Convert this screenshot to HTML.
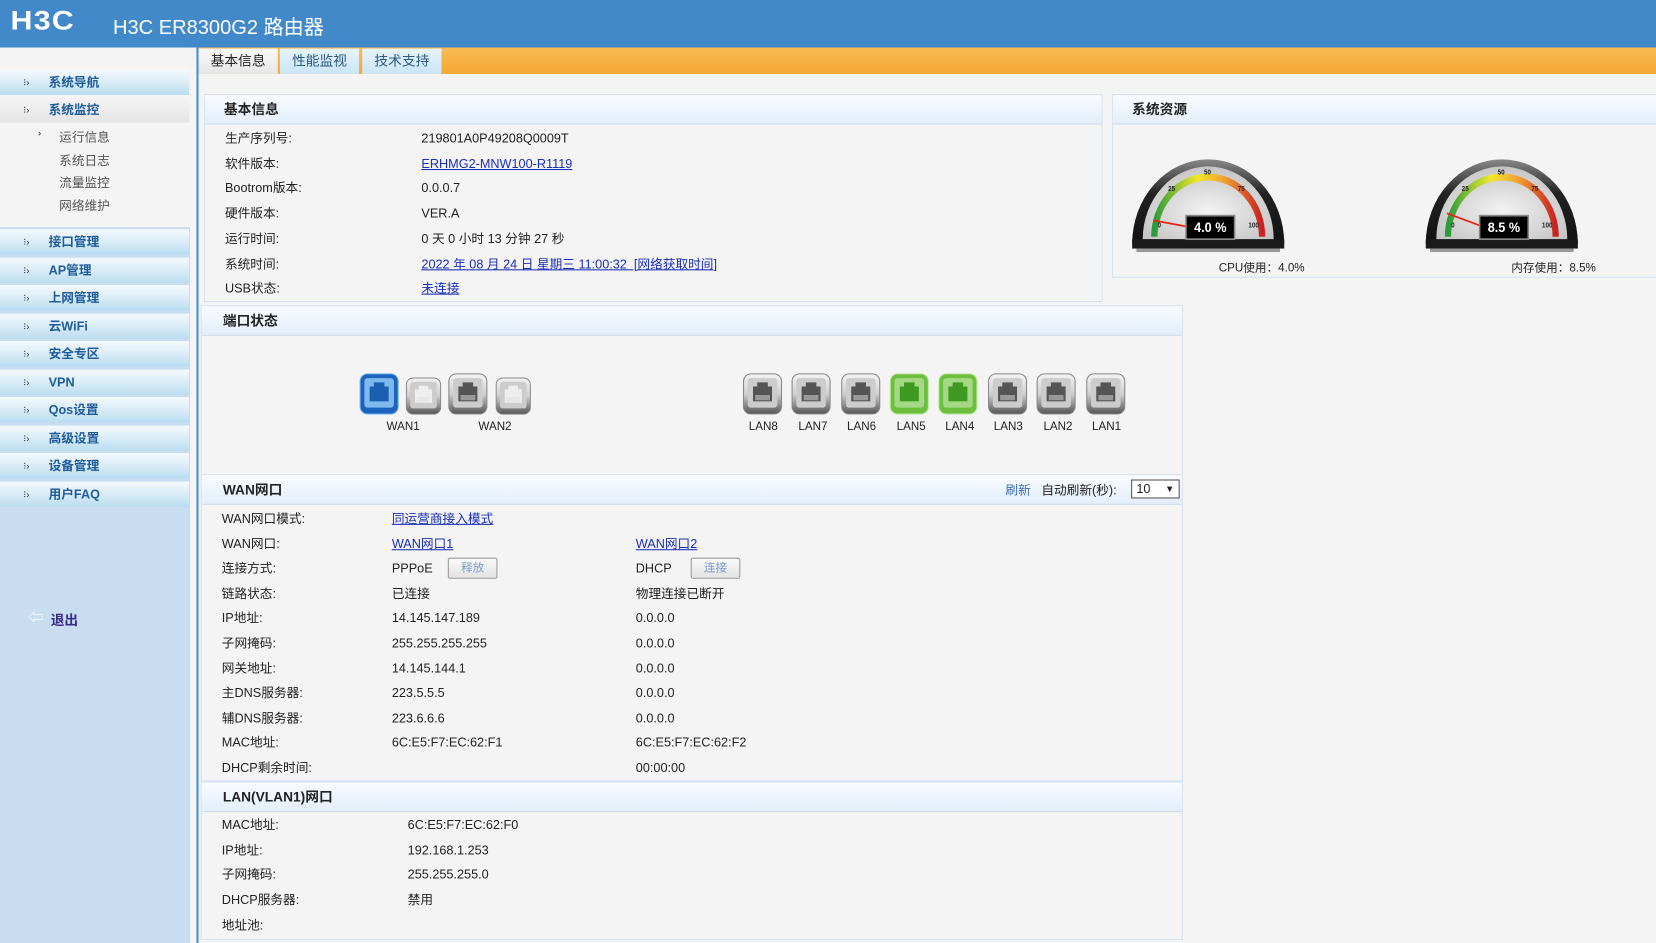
<!DOCTYPE html>
<html><head><meta charset="utf-8">
<style>
html,body{margin:0;padding:0;width:1656px;height:943px;overflow:hidden;background:#f4f4f4}
#w{position:absolute;left:0;top:0;width:1568px;height:893px;transform:scale(1.05612);transform-origin:0 0;font-family:"Liberation Sans","Noto Sans CJK SC",sans-serif;font-size:12px;color:#222;background:#f4f4f4}
.a{position:absolute;white-space:nowrap}
#hd{left:0;top:0;width:1568px;height:45px;background:#4189c8}
#ob{left:188px;top:45px;width:1380px;height:25px;background:linear-gradient(#f8bb55,#f6a733)}
.tab{top:46px;height:24px;line-height:24px;text-align:center;font-size:13px;width:75px;color:#2a5a85}
#sb{left:0;top:45px;width:180px;height:848px;background:#c8ddf0}
#sbt{left:0;top:45px;width:180px;height:170px;background:#f4f4f4}
#sl{left:186px;top:45px;width:2px;height:848px;background:#4a8fc8}
.mi{left:0;width:179px;height:24px;background:linear-gradient(#f4f9fd,#d9ecf7 50%,#b9ddf0);line-height:24px}
.mi span{position:absolute;left:46px;font-weight:bold;color:#1e5c9c;font-size:12px}
.mi i{position:absolute;left:22px;top:0;font-style:normal;color:#333;font-size:9px}
.sub{left:56px;color:#555;font-size:12px}
.pn{background:#f4f4f4;border:1px solid #d5e2ee}
.ph{height:28px;background:linear-gradient(#f9fbfe,#e3eefa);border-bottom:1px solid #cddbea;font-weight:bold;font-size:13px;line-height:28px;box-sizing:border-box;padding-left:18px}
a{color:#1b2fb5;text-decoration:underline}
.btn{display:inline-block;width:45px;height:18px;border:1px solid #999;border-radius:2px;background:linear-gradient(#fafafa,#e2e2e2);color:#7a9ccc;text-align:center;line-height:18px;font-size:11px}
.lbl{font-size:11px;color:#222}
</style></head><body><div id="w">
<div class="a" id="hd"></div>
<div class="a" style="left:10px;top:6px;color:#fff;font-size:25px;font-weight:bold;letter-spacing:1px;transform:scaleX(1.15);transform-origin:0 0;font-family:'Liberation Sans',sans-serif">H3C</div>
<div class="a" style="left:107px;top:11px;color:#fff;font-size:19px">H3C ER8300G2 路由器</div>
<div class="a" id="ob"></div>
<div class="a tab" style="left:188px;background:linear-gradient(#fafafa,#e6e6e6);color:#222">基本信息</div>
<div class="a tab" style="left:265px;background:linear-gradient(#e8f4fb,#c9e5f5)">性能监视</div>
<div class="a tab" style="left:343px;background:linear-gradient(#e8f4fb,#c9e5f5)">技术支持</div>

<div class="a" id="sb"></div><div class="a" id="sbt"></div><div class="a" id="sl"></div>
<div class="a mi" style="top:66px"><i>⁝›</i><span>系统导航</span></div>
<div class="a mi" style="top:92px;background:linear-gradient(#f4f4f4,#e4e4e4)"><i>⁝›</i><span>系统监控</span></div>
<div class="a" style="left:36px;top:121px;font-size:9px">›</div>
<div class="a sub" style="top:121px">运行信息</div>
<div class="a sub" style="top:143px">系统日志</div>
<div class="a sub" style="top:164px">流量监控</div>
<div class="a sub" style="top:186px">网络维护</div>
<div class="a mi" style="top:217px"><i>⁝›</i><span>接口管理</span></div>
<div class="a mi" style="top:244px"><i>⁝›</i><span>AP管理</span></div>
<div class="a mi" style="top:270px"><i>⁝›</i><span>上网管理</span></div>
<div class="a mi" style="top:297px"><i>⁝›</i><span>云WiFi</span></div>
<div class="a mi" style="top:323px"><i>⁝›</i><span>安全专区</span></div>
<div class="a mi" style="top:350px"><i>⁝›</i><span>VPN</span></div>
<div class="a mi" style="top:376px"><i>⁝›</i><span>Qos设置</span></div>
<div class="a mi" style="top:403px"><i>⁝›</i><span>高级设置</span></div>
<div class="a mi" style="top:429px"><i>⁝›</i><span>设备管理</span></div>
<div class="a mi" style="top:456px"><i>⁝›</i><span>用户FAQ</span></div>
<div class="a" style="left:26px;top:574px;color:#fff;font-size:15px">⇦</div>
<div class="a" style="left:48px;top:577px;color:#3a2a8a;font-size:13px;font-weight:bold">退出</div>

<!-- basic info -->
<div class="a pn" style="left:193px;top:89px;width:849px;height:195px">
<div class="ph">基本信息</div></div>
<div class="a" style="left:213px;top:120px;line-height:23.7px">生产序列号:<br>软件版本:<br>Bootrom版本:<br>硬件版本:<br>运行时间:<br>系统时间:<br>USB状态:</div>
<div class="a" style="left:399px;top:120px;line-height:23.7px">219801A0P49208Q0009T<br><a>ERHMG2-MNW100-R1119</a><br>0.0.0.7<br>VER.A<br>0 天 0 小时 13 分钟 27 秒<br><a>2022 年 08 月 24 日 星期三 11:00:32 &nbsp;[网络获取时间]</a><br><a>未连接</a></div>

<!-- resources -->
<div class="a pn" style="left:1053px;top:89px;width:520px;height:172px">
<div class="ph">系统资源</div></div>
<svg class="a" style="left:1070px;top:142px" width="148" height="100" viewBox="0 10 148 90" preserveAspectRatio="none">
<defs><linearGradient id="g" x1="0" x2="1"><stop offset="0" stop-color="#2a9a3a"/><stop offset=".4" stop-color="#f2e82a"/><stop offset=".65" stop-color="#f0a030"/><stop offset="1" stop-color="#c82222"/></linearGradient>
<radialGradient id="f" cx=".5" cy=".6" r=".6"><stop offset="0" stop-color="#f2f2f2"/><stop offset="1" stop-color="#c4c4c4"/></radialGradient>
<linearGradient id="o" x1="0" y1="0" x2="0" y2="1"><stop offset="0" stop-color="#888"/><stop offset=".4" stop-color="#222"/><stop offset="1" stop-color="#111"/></linearGradient></defs>
<path d="M2 90 A72 72 0 0 1 146 90 Z" fill="url(#o)"/><rect x="2" y="86" width="144" height="8" fill="#1a1a1a"/><rect x="6" y="94" width="136" height="3" fill="#999"/>
<path d="M12 86 A62 62 0 0 1 136 86 Z" fill="url(#f)"/>
<path d="M23 84 A51 51 0 0 1 125 84" fill="none" stroke="url(#g)" stroke-width="6"/>
<g font-size="6" font-weight="bold" font-family="Liberation Sans" fill="#222"><text x="26" y="76">0</text><text x="36" y="45">25</text><text x="70" y="31">50</text><text x="102" y="45">75</text><text x="112" y="76">100</text></g>
<line x1="22" y1="70" x2="58" y2="76" stroke="#e21" stroke-width="1.5"/>
<rect x="53" y="66" width="46" height="20" fill="#000" stroke="#888" stroke-width="1.5"/>
<text x="76" y="80" fill="#fff" font-size="12" font-weight="bold" text-anchor="middle" font-family="Liberation Sans">4.0 %</text></svg>
<svg class="a" style="left:1348px;top:142px" width="148" height="100" viewBox="0 10 148 90" preserveAspectRatio="none">
<path d="M2 90 A72 72 0 0 1 146 90 Z" fill="url(#o)"/><rect x="2" y="86" width="144" height="8" fill="#1a1a1a"/><rect x="6" y="94" width="136" height="3" fill="#999"/>
<path d="M12 86 A62 62 0 0 1 136 86 Z" fill="url(#f)"/>
<path d="M23 84 A51 51 0 0 1 125 84" fill="none" stroke="url(#g)" stroke-width="6"/>
<g font-size="6" font-weight="bold" font-family="Liberation Sans" fill="#222"><text x="26" y="76">0</text><text x="36" y="45">25</text><text x="70" y="31">50</text><text x="102" y="45">75</text><text x="112" y="76">100</text></g>
<line x1="22" y1="64" x2="58" y2="76" stroke="#e21" stroke-width="1.5"/>
<rect x="53" y="66" width="46" height="20" fill="#000" stroke="#888" stroke-width="1.5"/>
<text x="76" y="80" fill="#fff" font-size="12" font-weight="bold" text-anchor="middle" font-family="Liberation Sans">8.5 %</text></svg>
<div class="a lbl" style="left:1154px;top:245px">CPU使用：4.0%</div>
<div class="a lbl" style="left:1431px;top:245px">内存使用：8.5%</div>

<!-- port status -->
<div class="a pn" style="left:190px;top:289px;width:928px;height:159px">
<div class="ph" style="padding-left:20px">端口状态</div></div>
<svg width="0" height="0" style="position:absolute"><defs>
<linearGradient id="pb" x1="0" y1="0" x2="0" y2="1"><stop offset="0" stop-color="#f4f4f4"/><stop offset=".5" stop-color="#cfcfcf"/><stop offset="1" stop-color="#555"/></linearGradient>
<symbol id="jk" viewBox="0 0 38 40"><rect x="1" y="1" width="36" height="38" rx="7" fill="url(#pb)" stroke="#888"/><rect x="5" y="5" width="28" height="28" rx="3" fill="#ccc"/><path d="M14 9h10v4h4v14H10V13h4z" fill="currentColor"/><path d="M12 21h14v5H12z" fill="#ddd" opacity=".5"/></symbol>
</defs></svg>
<svg class="a" style="left:340px;top:353px;color:#1a5fb0" width="38" height="40"><rect x="1" y="1" width="36" height="38" rx="7" fill="#1c63bd" stroke="#6ab0f0"/><rect x="5" y="5" width="28" height="28" rx="3" fill="#7fb8ec"/><path d="M14 9h10v4h4v14H10V13h4z" fill="#1a5fb0"/></svg>
<svg class="a" style="left:383px;top:357px;color:#eee" width="36" height="36" viewBox="0 0 38 40"><use href="#jk"/></svg>
<svg class="a" style="left:424px;top:353px;color:#555" width="38" height="40"><use href="#jk"/></svg>
<svg class="a" style="left:468px;top:357px;color:#eee" width="36" height="36" viewBox="0 0 38 40"><use href="#jk"/></svg>
<svg class="a" style="left:703px;top:353px;color:#555" width="38" height="40"><use href="#jk"/></svg>
<svg class="a" style="left:749px;top:353px;color:#555" width="38" height="40"><use href="#jk"/></svg>
<svg class="a" style="left:796px;top:353px;color:#555" width="38" height="40"><use href="#jk"/></svg>
<svg class="a" style="left:842px;top:353px" width="38" height="40"><rect x="1" y="1" width="36" height="38" rx="7" fill="#6cbf3c" stroke="#b9e59c"/><rect x="5" y="5" width="28" height="28" rx="3" fill="#a5d884"/><path d="M14 9h10v4h4v14H10V13h4z" fill="#3f9a22"/></svg>
<svg class="a" style="left:888px;top:353px" width="38" height="40"><rect x="1" y="1" width="36" height="38" rx="7" fill="#6cbf3c" stroke="#b9e59c"/><rect x="5" y="5" width="28" height="28" rx="3" fill="#a5d884"/><path d="M14 9h10v4h4v14H10V13h4z" fill="#3f9a22"/></svg>
<svg class="a" style="left:935px;top:353px;color:#555" width="38" height="40"><use href="#jk"/></svg>
<svg class="a" style="left:981px;top:353px;color:#555" width="38" height="40"><use href="#jk"/></svg>
<svg class="a" style="left:1028px;top:353px;color:#555" width="38" height="40"><use href="#jk"/></svg>
<div class="a lbl" style="left:366px;top:398px">WAN1</div>
<div class="a lbl" style="left:453px;top:398px">WAN2</div>
<div class="a lbl" style="left:709px;top:398px">LAN8</div>
<div class="a lbl" style="left:756px;top:398px">LAN7</div>
<div class="a lbl" style="left:802px;top:398px">LAN6</div>
<div class="a lbl" style="left:849px;top:398px">LAN5</div>
<div class="a lbl" style="left:895px;top:398px">LAN4</div>
<div class="a lbl" style="left:941px;top:398px">LAN3</div>
<div class="a lbl" style="left:988px;top:398px">LAN2</div>
<div class="a lbl" style="left:1034px;top:398px">LAN1</div>

<!-- WAN -->
<div class="a pn" style="left:190px;top:449px;width:928px;height:289px">
<div class="ph" style="padding-left:20px">WAN网口</div></div>
<div class="a" style="left:952px;top:455px;color:#3a6fb8">刷新</div>
<div class="a" style="left:986px;top:455px">自动刷新(秒):</div>
<div class="a" style="left:1071px;top:454px;width:46px;height:18px;border:1px solid #555;background:#fff;box-sizing:border-box;font-size:12px;line-height:16px;padding-left:4px">10<span style="position:absolute;right:4px;font-size:9px">▼</span></div>
<div class="a" style="left:210px;top:480px;line-height:23.6px">WAN网口模式:<br>WAN网口:<br>连接方式:<br>链路状态:<br>IP地址:<br>子网掩码:<br>网关地址:<br>主DNS服务器:<br>辅DNS服务器:<br>MAC地址:<br>DHCP剩余时间:</div>
<div class="a" style="left:371px;top:480px;line-height:23.6px"><a>同运营商接入模式</a><br><a>WAN网口1</a><br>PPPoE<br>已连接<br>14.145.147.189<br>255.255.255.255<br>14.145.144.1<br>223.5.5.5<br>223.6.6.6<br>6C:E5:F7:EC:62:F1</div>
<div class="a" style="left:602px;top:503.6px;line-height:23.6px"><a>WAN网口2</a><br>DHCP<br>物理连接已断开<br>0.0.0.0<br>0.0.0.0<br>0.0.0.0<br>0.0.0.0<br>0.0.0.0<br>6C:E5:F7:EC:62:F2<br>00:00:00</div>
<div class="a btn" style="left:424px;top:528px">释放</div>
<div class="a btn" style="left:654px;top:528px">连接</div>

<!-- LAN -->
<div class="a pn" style="left:190px;top:740px;width:928px;height:148px">
<div class="ph" style="padding-left:20px">LAN(VLAN1)网口</div></div>
<div class="a" style="left:210px;top:770px;line-height:23.7px">MAC地址:<br>IP地址:<br>子网掩码:<br>DHCP服务器:<br>地址池:</div>
<div class="a" style="left:386px;top:770px;line-height:23.7px">6C:E5:F7:EC:62:F0<br>192.168.1.253<br>255.255.255.0<br>禁用</div>
</div></body></html>
